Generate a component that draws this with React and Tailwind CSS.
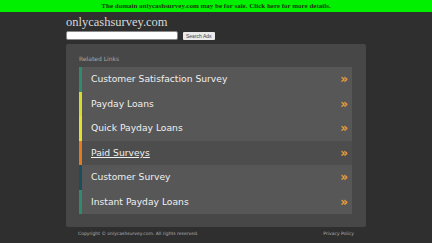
export default function App() {
  const links = [
    { label: 'Customer Satisfaction Survey', bar: 'border-[#2e8b6f]' },
    { label: 'Payday Loans', bar: 'border-[#d6dc2c]' },
    { label: 'Quick Payday Loans', bar: 'border-[#e3e02e]' },
    { label: 'Paid Surveys', bar: 'border-[#e37a1e]', active: true },
    { label: 'Customer Survey', bar: 'border-[#1b4d5c]' },
    { label: 'Instant Payday Loans', bar: 'border-[#2e8b6f]' },
  ]

  return (
    <div className="min-h-[243px] w-[432px] bg-[#2f2f2f] overflow-hidden">
      {/* sale banner */}
      <div className="h-[12px] bg-[#00f000] flex items-center justify-center">
        <span className="text-[7px] font-bold text-[#1a3a0a] leading-none" style={{ fontFamily: '"Liberation Serif", serif' }}>
          The domain onlycashsurvey.com may be for sale. Click here for more details.
        </span>
      </div>

      <div className="w-[300px] ml-[66px]">
        <div className="pt-[2px] h-[18px] text-[12.5px] leading-[16px] text-[#d8d8d8]" style={{ fontFamily: '"Liberation Serif", serif' }}>
          onlycashsurvey.com
        </div>
        <div className="flex items-center gap-[5px] mt-[1px]">
          <div className="w-[112px] h-[9px] rounded-[2px] bg-white border border-[#888]" />
          <div className="h-[8px] px-[3px] bg-[#eaeaea] rounded-[1px] text-[5px] leading-[8px] text-[#444]" style={{ fontFamily: '"Liberation Sans", sans-serif' }}>
            Search Ads
          </div>
        </div>

        <div className="mt-[4px] h-[183px] bg-[#474747] rounded-[2px] pl-[13px] pr-[14px] pt-[11px]" style={{ fontFamily: '"DejaVu Sans", sans-serif' }}>
          <div className="text-[6px] leading-[8px] text-[#a8a8a8] mb-[4px]">Related Links</div>
          <div className="flex flex-col">
            {links.map(l => (
              <div key={l.label} className={`h-[24.5px] flex items-center justify-between border-l-[3px] ${l.bar} ${l.active ? 'bg-[#4d4d4d]' : 'bg-[#575757]'} pl-[9px] pr-[4px]`}>
                <span className={`text-[9.2px] text-[#f0f0f0] ${l.active ? 'underline' : ''}`}>{l.label}</span>
                <span className="text-[12px] font-bold text-[#e8a03a] leading-none">»</span>
              </div>
            ))}
          </div>
        </div>
      </div>

      <div className="w-[300px] ml-[66px] flex justify-between px-[12px] pt-[4px] text-[4.5px] text-[#b0b0b0]" style={{ fontFamily: '"DejaVu Sans", sans-serif' }}>
        <span>Copyright © onlycashsurvey.com. All rights reserved.</span>
        <span>Privacy Policy</span>
      </div>
    </div>
  )
}
